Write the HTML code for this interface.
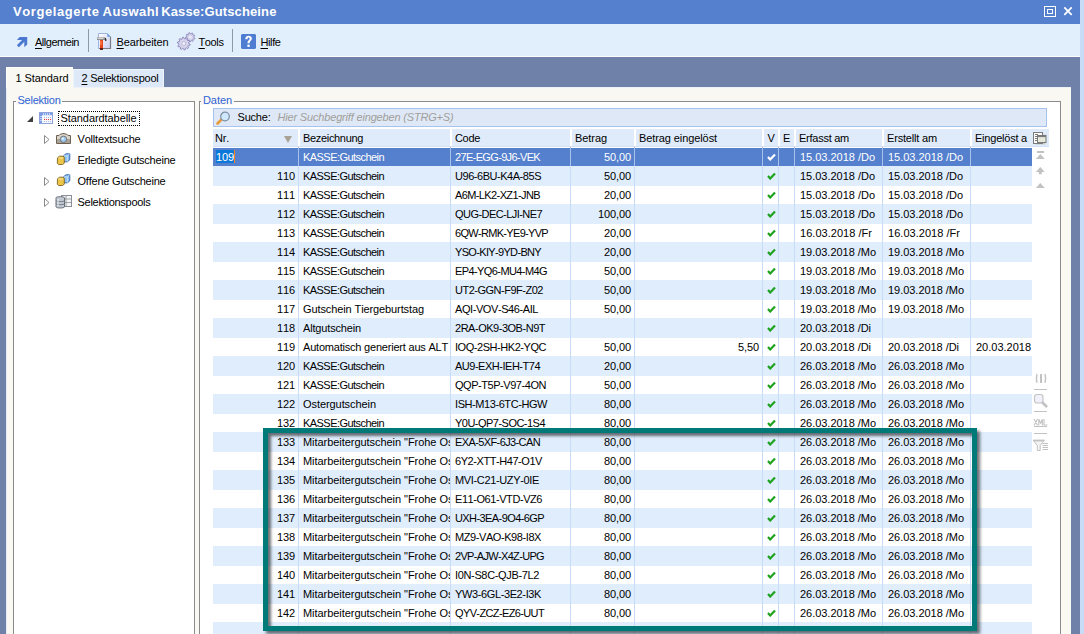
<!DOCTYPE html><html><head><meta charset="utf-8"><style>
*{margin:0;padding:0;box-sizing:border-box}
html,body{width:1084px;height:634px;overflow:hidden}
body{background:#6f80a9;font-family:"Liberation Sans",sans-serif;font-size:11px;color:#000;position:relative;font-kerning:none}
.a{position:absolute}
.t{position:absolute;white-space:nowrap;line-height:19px;height:19px;overflow:visible}
.c{overflow:hidden}
.u{text-decoration:underline;text-underline-offset:1.5px;text-decoration-thickness:1px}
</style></head><body>

<div class="a" style="left:0;top:0;width:1080px;height:24px;background:#5580cd"></div>
<div class="t" style="left:13.00px;top:2.00px;letter-spacing:0.586px;color:#fff;font-weight:bold;font-size:13px">Vorgelagerte</div>
<div class="t" style="left:102.60px;top:2.00px;letter-spacing:0.435px;color:#fff;font-weight:bold;font-size:13px">Auswahl</div>
<div class="t" style="left:161.20px;top:2.00px;letter-spacing:0.117px;color:#fff;font-weight:bold;font-size:13px">Kasse:Gutscheine</div>
<div class="a" style="left:1044px;top:6px;width:12px;height:11px;border:1.5px solid #fff"></div>
<div class="a" style="left:1047px;top:9px;width:6px;height:5px;border:1.5px solid #fff"></div>
<svg class="a" style="left:1060px;top:4px" width="16" height="16" viewBox="0 0 16 16"><path d="M4.3 3.4L11.7 10.8M11.7 3.4L4.3 10.8" stroke="#fff" stroke-width="1.8"/></svg>
<div class="a" style="left:1080px;top:0;width:4px;height:634px;background:#c8dcf8"></div>
<div class="a" style="left:0;top:24px;width:1080px;height:32px;background:#e1effc"></div>
<div class="a" style="left:0;top:56px;width:1080px;height:1px;background:#fbfdff"></div>
<div class="a" style="left:88px;top:29px;width:1px;height:23px;background:#8e9aa8"></div>
<div class="a" style="left:232px;top:29px;width:1px;height:23px;background:#8e9aa8"></div>
<svg class="a" style="left:12px;top:30px" width="24" height="24" viewBox="0 0 24 24"><path d="M4.9 9.9L7.7 7.1H15.2V14.5L12.3 17.3V10H4.9Z" fill="#4a77cf"/><path d="M5.9 16.3L12.6 9.6" stroke="#4a77cf" stroke-width="2.8"/></svg>
<svg class="a" style="left:92px;top:30px" width="24" height="24" viewBox="0 0 24 24"><defs><linearGradient id="dg" x1="0" y1="0" x2="1" y2="1"><stop offset="0" stop-color="#ffffff"/><stop offset="1" stop-color="#c9cdf2"/></linearGradient></defs><path d="M6.5 3.5H15.3L18.5 6.7V18.5H6.5Z" fill="url(#dg)" stroke="#9fb3dc"/><path d="M18.5 6.7V18.5H7" fill="none" stroke="#7d7d80" stroke-width="1.2"/><path d="M15.3 3.5V6.7H18.5Z" fill="#5f9be6"/><path d="M5 7.2H12.3C13.8 7.2 14.6 8.4 14.2 11.2L13.2 10.8C13.1 9.9 12.7 9.8 12 10H5Z" fill="#8f8f90"/><path d="M5.5 8.2H11.5" stroke="#f4f4f4" stroke-width="1"/><path d="M13.3 8.3C13.8 8.9 13.9 9.8 13.7 10.8" stroke="#202020" stroke-width="1.2" fill="none"/><rect x="8" y="10" width="3" height="9.5" fill="#e8461a"/><rect x="8" y="18.2" width="3" height="1.6" fill="#401008"/><path d="M9 11V15" stroke="#ffb070" stroke-width="0.8"/></svg>
<svg class="a" style="left:174px;top:30px" width="24" height="24" viewBox="0 0 24 24"><path d="M20.91 8.23 L20.67 9.02 L19.29 9.13 L18.92 9.62 L19.23 10.98 L18.55 11.43 L17.41 10.62 L16.82 10.76 L16.18 12.00 L15.37 11.91 L15.02 10.56 L14.47 10.29 L13.19 10.82 L12.62 10.23 L13.23 8.97 L12.98 8.41 L11.65 8.00 L11.60 7.18 L12.87 6.60 L13.04 6.02 L12.29 4.85 L12.78 4.19 L14.12 4.56 L14.63 4.23 L14.81 2.84 L15.60 2.65 L16.39 3.80 L17.00 3.87 L18.02 2.93 L18.75 3.29 L18.62 4.68 L19.04 5.12 L20.43 5.05 L20.76 5.81 L19.76 6.78 L19.80 7.39Z" fill="#d4d1ea" stroke="#8b87bb" stroke-width="0.9"/><circle cx="16.3" cy="7.3" r="1.3" fill="#eeeefa"/><path d="M16.17 14.24 L15.99 15.23 L14.29 15.57 L13.92 16.25 L14.58 17.86 L13.85 18.55 L12.27 17.83 L11.58 18.17 L11.16 19.85 L10.17 19.99 L9.31 18.48 L8.55 18.34 L7.22 19.46 L6.34 18.98 L6.54 17.26 L6.01 16.70 L4.27 16.83 L3.84 15.92 L5.01 14.64 L4.91 13.88 L3.43 12.96 L3.61 11.97 L5.31 11.63 L5.68 10.95 L5.02 9.34 L5.75 8.65 L7.33 9.37 L8.02 9.03 L8.44 7.35 L9.43 7.21 L10.29 8.72 L11.05 8.86 L12.38 7.74 L13.26 8.22 L13.06 9.94 L13.59 10.50 L15.33 10.37 L15.76 11.28 L14.59 12.56 L14.69 13.32Z" fill="#d6d3ec" stroke="#8682b6" stroke-width="0.9"/><circle cx="9.8" cy="13.6" r="1.9" fill="#f2f2fb" stroke="#a09cc8" stroke-width="0.6"/></svg>
<svg class="a" style="left:241px;top:34px" width="15" height="15" viewBox="0 0 15 15"><path d="M1 0H14L15 1V14L14 15H1L0 14V1Z" fill="#4f7dd2"/><path d="M4.3 5.2C4.3 2.6 6 1.8 7.6 1.8C9.6 1.8 10.9 3 10.9 4.6C10.9 6.8 8.6 7 8.6 9.3H6.5C6.5 6.2 8.6 6.2 8.6 4.7C8.6 3.9 8.2 3.6 7.5 3.6C6.8 3.6 6.5 4.1 6.5 5.2Z" fill="#fff"/><rect x="6.4" y="10.6" width="2.3" height="2.3" fill="#fff"/></svg>
<div class="t" style="left:35.00px;top:32.69px;letter-spacing:-0.478px;"><span class="u">A</span>llgemein</div>
<div class="t" style="left:116.50px;top:32.69px;letter-spacing:-0.121px;"><span class="u">B</span>earbeiten</div>
<div class="t" style="left:198.50px;top:32.69px;letter-spacing:-0.380px;"><span class="u">T</span>ools</div>
<div class="t" style="left:260.50px;top:32.69px;letter-spacing:-0.401px;"><span class="u">H</span>ilfe</div>
<div class="a" style="left:6px;top:87px;width:1065px;height:547px;background:#f9f8f3;border-top:1px solid #eef2f8;border-left:1px solid #e4ebf4"></div>
<div class="a" style="left:6px;top:67px;width:67px;height:21px;background:#f9f8f3;border-top:1px solid #fdfdfb;border-left:1px solid #fdfdfb"></div>
<div class="a" style="left:73px;top:69px;width:91px;height:18px;background:#dde9f8;border:1px solid #eef4fc;border-bottom:none"></div>
<div class="t" style="left:15.50px;top:68.69px;letter-spacing:-0.082px;">1 Standard</div>
<div class="t" style="left:81.50px;top:68.69px;letter-spacing:-0.233px;"><span class="u">2</span> Selektionspool</div>
<div class="a" style="left:13px;top:101px;width:182px;height:540px;border:1px solid #8b8b8b;background:#fff"></div>
<div class="a" style="left:199px;top:101px;width:862px;height:540px;border:1px solid #8b8b8b;background:#fff"></div>
<div class="a" style="left:16px;top:95px;width:46px;height:10px;background:#f9f8f3"></div>
<div class="a" style="left:201px;top:95px;width:33px;height:10px;background:#f9f8f3"></div>
<div class="t" style="left:17.50px;top:90.69px;letter-spacing:-0.250px;color:#2f64d6">Selektion</div>
<div class="t" style="left:203.00px;top:90.69px;letter-spacing:-0.071px;color:#2f64d6">Daten</div>
<svg class="a" style="left:27px;top:116px" width="7" height="6"><path d="M6 0V6H0Z" fill="#404040"/></svg>
<svg class="a" style="left:39px;top:112px" width="14" height="12" viewBox="0 0 14 12"><rect x="0.5" y="0.5" width="13" height="11" fill="#f6f8fe" stroke="#8ea2dc"/><rect x="1" y="1" width="12" height="2.2" fill="#7c9ce6"/><path d="M4.5 1.2V3M6.5 1.2V3M8.5 1.2V3M10.5 1.2V3" stroke="#e4ecfc" stroke-width="0.8"/><rect x="1" y="1" width="2" height="10" fill="#7c9ce6"/><path d="M1.2 4.5H2.8M1.2 6.5H2.8M1.2 8.5H2.8" stroke="#e4ecfc" stroke-width="0.8"/><path d="M5 7.5H13" stroke="#e83030" stroke-width="1" stroke-dasharray="1 1"/><path d="M5 5.5H13M5 9.5H13" stroke="#aebde8" stroke-width="1" stroke-dasharray="1 1"/></svg>
<div class="a" style="left:58px;top:111px;width:82px;height:15px;border:1px dotted #000"></div>
<div class="t" style="left:60.50px;top:108.69px;letter-spacing:-0.071px;">Standardtabelle</div>
<svg class="a" style="left:44px;top:135px" width="6" height="9"><path d="M0.5 0.5L5 4.5L0.5 8.5Z" fill="#fff" stroke="#8a8a8a"/></svg>
<svg class="a" style="left:56px;top:133px" width="15" height="11" viewBox="0 0 15 11"><path d="M0.5 2.5H3L4.5 1H6.5V0.5H8.5V1H10.5L12 2.5H14.5V10.5H0.5Z" fill="#d8d4cc" stroke="#6f6250"/><rect x="1" y="6" width="13" height="4" fill="#a8a39a"/><circle cx="7.5" cy="6.3" r="3.2" fill="#9cc8f4" stroke="#6f6250" stroke-width="0.8"/><circle cx="6.8" cy="5.6" r="1.2" fill="#e6f2ff"/></svg>
<div class="t" style="left:77.50px;top:129.69px;letter-spacing:-0.187px;">Volltextsuche</div>
<svg class="a" style="left:56px;top:153px" width="15" height="12" viewBox="0 0 15 12"><path d="M7.5 2.8L10 0.8H13.8V6.8L11.3 8.8H7.5Z" fill="#8cc0f0" stroke="#2f5fa8" stroke-width="0.9"/><path d="M7.8 2.8H11.3V8.6M11.3 2.8L13.8 0.8" stroke="#e8f3ff" stroke-width="0.6" fill="none"/><path d="M1.5 4.8L3.5 3.2H7L8.3 4.3V10.2L6.5 11.5H2.5L1.3 10.2Z" fill="#edc54a" stroke="#7f6420" stroke-width="0.9"/><path d="M2.3 5H7" stroke="#fff2b0" stroke-width="0.8"/></svg>
<div class="t" style="left:77.50px;top:150.69px;letter-spacing:-0.206px;">Erledigte Gutscheine</div>
<svg class="a" style="left:44px;top:177px" width="6" height="9"><path d="M0.5 0.5L5 4.5L0.5 8.5Z" fill="#fff" stroke="#8a8a8a"/></svg>
<svg class="a" style="left:56px;top:174px" width="15" height="12" viewBox="0 0 15 12"><path d="M7.5 2.8L10 0.8H13.8V6.8L11.3 8.8H7.5Z" fill="#8cc0f0" stroke="#2f5fa8" stroke-width="0.9"/><path d="M7.8 2.8H11.3V8.6M11.3 2.8L13.8 0.8" stroke="#e8f3ff" stroke-width="0.6" fill="none"/><path d="M1.5 4.8L3.5 3.2H7L8.3 4.3V10.2L6.5 11.5H2.5L1.3 10.2Z" fill="#edc54a" stroke="#7f6420" stroke-width="0.9"/><path d="M2.3 5H7" stroke="#fff2b0" stroke-width="0.8"/></svg>
<div class="t" style="left:77.50px;top:171.69px;letter-spacing:-0.219px;">Offene Gutscheine</div>
<svg class="a" style="left:44px;top:198px" width="6" height="9"><path d="M0.5 0.5L5 4.5L0.5 8.5Z" fill="#fff" stroke="#8a8a8a"/></svg>
<svg class="a" style="left:55px;top:195px" width="17" height="14" viewBox="0 0 17 14"><rect x="6.5" y="0.5" width="10" height="11" fill="#f4f5f6" stroke="#8c9098"/><path d="M6.5 4H16.5M6.5 7.5H16.5M11 0.5V11.5" stroke="#8c9098" stroke-width="0.8"/><path d="M1 2.8C1 1.3 9.5 1.3 9.5 2.8V11.8C9.5 13.4 1 13.4 1 11.8Z" fill="#c2c9d2" stroke="#5f6670" stroke-width="0.9"/><path d="M1 5.5C1 7 9.5 7 9.5 5.5M1 8.5C1 10 9.5 10 9.5 8.5" stroke="#5f6670" stroke-width="0.8" fill="none"/><path d="M3 4V11" stroke="#eef2f6" stroke-width="1"/></svg>
<div class="t" style="left:77.50px;top:192.69px;letter-spacing:-0.270px;">Selektionspools</div>
<div class="a" style="left:213px;top:108px;width:834px;height:19px;background:#dfe8f6;border:1px solid #a7c2ec"></div>
<svg class="a" style="left:216px;top:111px" width="15" height="14" viewBox="0 0 15 14"><path d="M1.5 12.5L6 8" stroke="#e69a3a" stroke-width="2.6" stroke-linecap="round"/><circle cx="9" cy="5.5" r="4.3" fill="#cfe8fb" stroke="#7a8ea6" stroke-width="1.2"/></svg>
<div class="t" style="left:237.50px;top:107.69px;letter-spacing:-0.208px;">Suche:</div>
<div class="t" style="left:277.50px;top:107.69px;letter-spacing:-0.173px;color:#a09f9a;font-style:italic">Hier Suchbegriff eingeben (STRG+S)</div>
<div class="a" style="left:213px;top:127px;width:836px;height:21px;background:#fff"></div>
<div class="a" style="left:213px;top:129px;width:85px;height:17px;background:#dfebfa"></div>
<div class="t" style="left:215.00px;top:128.69px;letter-spacing:-0.221px;">Nr.</div>
<div class="a" style="left:300px;top:129px;width:150px;height:17px;background:#dfebfa"></div>
<div class="t" style="left:303.00px;top:128.69px;letter-spacing:-0.328px;">Bezeichnung</div>
<div class="a" style="left:452px;top:129px;width:118px;height:17px;background:#dfebfa"></div>
<div class="t" style="left:455.00px;top:128.69px;letter-spacing:-0.324px;">Code</div>
<div class="a" style="left:572px;top:129px;width:62px;height:17px;background:#dfebfa"></div>
<div class="t" style="left:575.00px;top:128.69px;letter-spacing:-0.068px;">Betrag</div>
<div class="a" style="left:636px;top:129px;width:126px;height:17px;background:#dfebfa"></div>
<div class="t" style="left:639.00px;top:128.69px;letter-spacing:-0.094px;">Betrag eingelöst</div>
<div class="a" style="left:764px;top:129px;width:14px;height:17px;background:#dfebfa"></div>
<div class="t" style="left:767.50px;top:128.69px;letter-spacing:-1.337px;">V</div>
<div class="a" style="left:780px;top:129px;width:14px;height:17px;background:#dfebfa"></div>
<div class="t" style="left:783.00px;top:128.69px;letter-spacing:-1.337px;">E</div>
<div class="a" style="left:796px;top:129px;width:86px;height:17px;background:#dfebfa"></div>
<div class="t" style="left:799.00px;top:128.69px;letter-spacing:-0.257px;">Erfasst am</div>
<div class="a" style="left:884px;top:129px;width:86px;height:17px;background:#dfebfa"></div>
<div class="t" style="left:887.00px;top:128.69px;letter-spacing:-0.178px;">Erstellt am</div>
<div class="a" style="left:972px;top:129px;width:77px;height:17px;background:#dfebfa"></div>
<div class="t" style="left:975.00px;top:128.69px;letter-spacing:-0.220px;">Eingelöst a</div>
<div class="a" style="left:213px;top:146px;width:836px;height:1px;background:#d3e2f7"></div>
<svg class="a" style="left:284px;top:136px" width="8" height="7"><path d="M0 0H8L4 7Z" fill="#a8a394"/></svg>
<svg class="a" style="left:1032px;top:131px" width="16" height="15" viewBox="0 0 16 15"><rect x="3.5" y="3.5" width="10" height="10" fill="#b8bca8" opacity="0.6"/><rect x="1.5" y="1.5" width="9" height="11" fill="#fbfbfb" stroke="#7b7b7b"/><path d="M3 3.5H6M3 5.5H5M3 7.5H5M3 9.5H5" stroke="#7b7b7b"/><rect x="5.5" y="4.5" width="8.5" height="7" fill="#e6e8dc" stroke="#7b7b7b"/><rect x="5.5" y="4.5" width="8.5" height="1.6" fill="#7b7b7b"/></svg>
<div class="a" style="left:213px;top:148px;width:819px;height:18px;background:#5580cd"></div>
<div class="a" style="left:298px;top:147px;width:1px;height:19px;background:#a9c2ec"></div>
<div class="a" style="left:450px;top:147px;width:1px;height:19px;background:#a9c2ec"></div>
<div class="a" style="left:570px;top:147px;width:1px;height:19px;background:#a9c2ec"></div>
<div class="a" style="left:634px;top:147px;width:1px;height:19px;background:#a9c2ec"></div>
<div class="a" style="left:762px;top:147px;width:1px;height:19px;background:#a9c2ec"></div>
<div class="a" style="left:778px;top:147px;width:1px;height:19px;background:#a9c2ec"></div>
<div class="a" style="left:794px;top:147px;width:1px;height:19px;background:#a9c2ec"></div>
<div class="a" style="left:882px;top:147px;width:1px;height:19px;background:#a9c2ec"></div>
<div class="a" style="left:970px;top:147px;width:1px;height:19px;background:#a9c2ec"></div>
<div class="a" style="left:216px;top:150px;width:18px;height:13px;background:#0c78da"></div>
<div class="t" style="left:216.00px;top:147.69px;letter-spacing:-0.118px;color:#fff">109</div>
<div class="a" style="left:234px;top:150px;width:1px;height:13px;background:#ff8a1a"></div>
<div class="a c" style="left:298px;top:147px;width:152px;height:19px"><div class="t" style="left:5.00px;top:0.69px;letter-spacing:-0.551px;color:#fff">KASSE:Gutschein</div></div>
<div class="t" style="left:455.00px;top:147.69px;letter-spacing:-0.650px;color:#fff">27E-EGG-9J6-VEK</div>
<div class="t" style="left:604.00px;top:147.69px;letter-spacing:-0.105px;color:#fff">50,00</div>
<svg class="a" style="left:767px;top:153px" width="9" height="8" viewBox="0 0 9 8"><path d="M1 4L3.2 6.5L8 1.5" stroke="#fff" stroke-width="2.2" fill="none"/></svg>
<div class="t" style="left:800.00px;top:147.69px;letter-spacing:-0.016px;color:#fff">15.03.2018 /Do</div>
<div class="t" style="left:888.00px;top:147.69px;letter-spacing:-0.016px;color:#fff">15.03.2018 /Do</div>
<div class="a" style="left:213px;top:166px;width:819px;height:20px;background:#dfedfd"></div>
<div class="a" style="left:298px;top:166px;width:1px;height:19px;background:#c9dcf7"></div>
<div class="a" style="left:450px;top:166px;width:1px;height:19px;background:#c9dcf7"></div>
<div class="a" style="left:570px;top:166px;width:1px;height:19px;background:#c9dcf7"></div>
<div class="a" style="left:634px;top:166px;width:1px;height:19px;background:#c9dcf7"></div>
<div class="a" style="left:762px;top:166px;width:1px;height:19px;background:#c9dcf7"></div>
<div class="a" style="left:778px;top:166px;width:1px;height:19px;background:#c9dcf7"></div>
<div class="a" style="left:794px;top:166px;width:1px;height:19px;background:#c9dcf7"></div>
<div class="a" style="left:882px;top:166px;width:1px;height:19px;background:#c9dcf7"></div>
<div class="a" style="left:970px;top:166px;width:1px;height:19px;background:#c9dcf7"></div>
<div class="t" style="left:277.00px;top:166.69px;letter-spacing:-0.118px;">110</div>
<div class="a c" style="left:298px;top:166px;width:152px;height:19px"><div class="t" style="left:5.00px;top:0.69px;letter-spacing:-0.551px;color:#000">KASSE:Gutschein</div></div>
<div class="t" style="left:455.00px;top:166.69px;letter-spacing:-0.462px;color:#000">U96-6BU-K4A-85S</div>
<div class="t" style="left:604.00px;top:166.69px;letter-spacing:-0.105px;color:#000">50,00</div>
<svg class="a" style="left:767px;top:172px" width="9" height="8" viewBox="0 0 9 8"><path d="M1 4L3.2 6.5L8 1.5" stroke="#1ea21e" stroke-width="2.2" fill="none"/></svg>
<div class="t" style="left:800.00px;top:166.69px;letter-spacing:-0.016px;color:#000">15.03.2018 /Do</div>
<div class="t" style="left:888.00px;top:166.69px;letter-spacing:-0.016px;color:#000">15.03.2018 /Do</div>
<div class="a" style="left:213px;top:186px;width:819px;height:18px;background:#ffffff"></div>
<div class="a" style="left:298px;top:185px;width:1px;height:19px;background:#c9dcf7"></div>
<div class="a" style="left:450px;top:185px;width:1px;height:19px;background:#c9dcf7"></div>
<div class="a" style="left:570px;top:185px;width:1px;height:19px;background:#c9dcf7"></div>
<div class="a" style="left:634px;top:185px;width:1px;height:19px;background:#c9dcf7"></div>
<div class="a" style="left:762px;top:185px;width:1px;height:19px;background:#c9dcf7"></div>
<div class="a" style="left:778px;top:185px;width:1px;height:19px;background:#c9dcf7"></div>
<div class="a" style="left:794px;top:185px;width:1px;height:19px;background:#c9dcf7"></div>
<div class="a" style="left:882px;top:185px;width:1px;height:19px;background:#c9dcf7"></div>
<div class="a" style="left:970px;top:185px;width:1px;height:19px;background:#c9dcf7"></div>
<div class="t" style="left:277.00px;top:185.69px;letter-spacing:-0.118px;">111</div>
<div class="a c" style="left:298px;top:185px;width:152px;height:19px"><div class="t" style="left:5.00px;top:0.69px;letter-spacing:-0.551px;color:#000">KASSE:Gutschein</div></div>
<div class="t" style="left:455.00px;top:185.69px;letter-spacing:-0.609px;color:#000">A6M-LK2-XZ1-JNB</div>
<div class="t" style="left:604.00px;top:185.69px;letter-spacing:-0.105px;color:#000">20,00</div>
<svg class="a" style="left:767px;top:191px" width="9" height="8" viewBox="0 0 9 8"><path d="M1 4L3.2 6.5L8 1.5" stroke="#1ea21e" stroke-width="2.2" fill="none"/></svg>
<div class="t" style="left:800.00px;top:185.69px;letter-spacing:-0.016px;color:#000">15.03.2018 /Do</div>
<div class="t" style="left:888.00px;top:185.69px;letter-spacing:-0.016px;color:#000">15.03.2018 /Do</div>
<div class="a" style="left:213px;top:204px;width:819px;height:20px;background:#dfedfd"></div>
<div class="a" style="left:298px;top:204px;width:1px;height:19px;background:#c9dcf7"></div>
<div class="a" style="left:450px;top:204px;width:1px;height:19px;background:#c9dcf7"></div>
<div class="a" style="left:570px;top:204px;width:1px;height:19px;background:#c9dcf7"></div>
<div class="a" style="left:634px;top:204px;width:1px;height:19px;background:#c9dcf7"></div>
<div class="a" style="left:762px;top:204px;width:1px;height:19px;background:#c9dcf7"></div>
<div class="a" style="left:778px;top:204px;width:1px;height:19px;background:#c9dcf7"></div>
<div class="a" style="left:794px;top:204px;width:1px;height:19px;background:#c9dcf7"></div>
<div class="a" style="left:882px;top:204px;width:1px;height:19px;background:#c9dcf7"></div>
<div class="a" style="left:970px;top:204px;width:1px;height:19px;background:#c9dcf7"></div>
<div class="t" style="left:277.00px;top:204.69px;letter-spacing:-0.118px;">112</div>
<div class="a c" style="left:298px;top:204px;width:152px;height:19px"><div class="t" style="left:5.00px;top:0.69px;letter-spacing:-0.551px;color:#000">KASSE:Gutschein</div></div>
<div class="t" style="left:455.00px;top:204.69px;letter-spacing:-0.556px;color:#000">QUG-DEC-LJI-NE7</div>
<div class="t" style="left:598.00px;top:204.69px;letter-spacing:-0.107px;color:#000">100,00</div>
<svg class="a" style="left:767px;top:210px" width="9" height="8" viewBox="0 0 9 8"><path d="M1 4L3.2 6.5L8 1.5" stroke="#1ea21e" stroke-width="2.2" fill="none"/></svg>
<div class="t" style="left:800.00px;top:204.69px;letter-spacing:-0.016px;color:#000">15.03.2018 /Do</div>
<div class="t" style="left:888.00px;top:204.69px;letter-spacing:-0.016px;color:#000">15.03.2018 /Do</div>
<div class="a" style="left:213px;top:224px;width:819px;height:18px;background:#ffffff"></div>
<div class="a" style="left:298px;top:223px;width:1px;height:19px;background:#c9dcf7"></div>
<div class="a" style="left:450px;top:223px;width:1px;height:19px;background:#c9dcf7"></div>
<div class="a" style="left:570px;top:223px;width:1px;height:19px;background:#c9dcf7"></div>
<div class="a" style="left:634px;top:223px;width:1px;height:19px;background:#c9dcf7"></div>
<div class="a" style="left:762px;top:223px;width:1px;height:19px;background:#c9dcf7"></div>
<div class="a" style="left:778px;top:223px;width:1px;height:19px;background:#c9dcf7"></div>
<div class="a" style="left:794px;top:223px;width:1px;height:19px;background:#c9dcf7"></div>
<div class="a" style="left:882px;top:223px;width:1px;height:19px;background:#c9dcf7"></div>
<div class="a" style="left:970px;top:223px;width:1px;height:19px;background:#c9dcf7"></div>
<div class="t" style="left:277.00px;top:223.69px;letter-spacing:-0.118px;">113</div>
<div class="a c" style="left:298px;top:223px;width:152px;height:19px"><div class="t" style="left:5.00px;top:0.69px;letter-spacing:-0.551px;color:#000">KASSE:Gutschein</div></div>
<div class="t" style="left:455.00px;top:223.69px;letter-spacing:-0.686px;color:#000">6QW-RMK-YE9-YVP</div>
<div class="t" style="left:604.00px;top:223.69px;letter-spacing:-0.105px;color:#000">20,00</div>
<svg class="a" style="left:767px;top:229px" width="9" height="8" viewBox="0 0 9 8"><path d="M1 4L3.2 6.5L8 1.5" stroke="#1ea21e" stroke-width="2.2" fill="none"/></svg>
<div class="t" style="left:800.00px;top:223.69px;letter-spacing:0.032px;color:#000">16.03.2018 /Fr</div>
<div class="t" style="left:888.00px;top:223.69px;letter-spacing:0.032px;color:#000">16.03.2018 /Fr</div>
<div class="a" style="left:213px;top:242px;width:819px;height:20px;background:#dfedfd"></div>
<div class="a" style="left:298px;top:242px;width:1px;height:19px;background:#c9dcf7"></div>
<div class="a" style="left:450px;top:242px;width:1px;height:19px;background:#c9dcf7"></div>
<div class="a" style="left:570px;top:242px;width:1px;height:19px;background:#c9dcf7"></div>
<div class="a" style="left:634px;top:242px;width:1px;height:19px;background:#c9dcf7"></div>
<div class="a" style="left:762px;top:242px;width:1px;height:19px;background:#c9dcf7"></div>
<div class="a" style="left:778px;top:242px;width:1px;height:19px;background:#c9dcf7"></div>
<div class="a" style="left:794px;top:242px;width:1px;height:19px;background:#c9dcf7"></div>
<div class="a" style="left:882px;top:242px;width:1px;height:19px;background:#c9dcf7"></div>
<div class="a" style="left:970px;top:242px;width:1px;height:19px;background:#c9dcf7"></div>
<div class="t" style="left:277.00px;top:242.69px;letter-spacing:-0.118px;">114</div>
<div class="a c" style="left:298px;top:242px;width:152px;height:19px"><div class="t" style="left:5.00px;top:0.69px;letter-spacing:-0.551px;color:#000">KASSE:Gutschein</div></div>
<div class="t" style="left:455.00px;top:242.69px;letter-spacing:-0.664px;color:#000">YSO-KIY-9YD-BNY</div>
<div class="t" style="left:604.00px;top:242.69px;letter-spacing:-0.105px;color:#000">20,00</div>
<svg class="a" style="left:767px;top:248px" width="9" height="8" viewBox="0 0 9 8"><path d="M1 4L3.2 6.5L8 1.5" stroke="#1ea21e" stroke-width="2.2" fill="none"/></svg>
<div class="t" style="left:800.00px;top:242.69px;letter-spacing:-0.032px;color:#000">19.03.2018 /Mo</div>
<div class="t" style="left:888.00px;top:242.69px;letter-spacing:-0.032px;color:#000">19.03.2018 /Mo</div>
<div class="a" style="left:213px;top:262px;width:819px;height:18px;background:#ffffff"></div>
<div class="a" style="left:298px;top:261px;width:1px;height:19px;background:#c9dcf7"></div>
<div class="a" style="left:450px;top:261px;width:1px;height:19px;background:#c9dcf7"></div>
<div class="a" style="left:570px;top:261px;width:1px;height:19px;background:#c9dcf7"></div>
<div class="a" style="left:634px;top:261px;width:1px;height:19px;background:#c9dcf7"></div>
<div class="a" style="left:762px;top:261px;width:1px;height:19px;background:#c9dcf7"></div>
<div class="a" style="left:778px;top:261px;width:1px;height:19px;background:#c9dcf7"></div>
<div class="a" style="left:794px;top:261px;width:1px;height:19px;background:#c9dcf7"></div>
<div class="a" style="left:882px;top:261px;width:1px;height:19px;background:#c9dcf7"></div>
<div class="a" style="left:970px;top:261px;width:1px;height:19px;background:#c9dcf7"></div>
<div class="t" style="left:277.00px;top:261.69px;letter-spacing:-0.118px;">115</div>
<div class="a c" style="left:298px;top:261px;width:152px;height:19px"><div class="t" style="left:5.00px;top:0.69px;letter-spacing:-0.551px;color:#000">KASSE:Gutschein</div></div>
<div class="t" style="left:455.00px;top:261.69px;letter-spacing:-0.590px;color:#000">EP4-YQ6-MU4-M4G</div>
<div class="t" style="left:604.00px;top:261.69px;letter-spacing:-0.105px;color:#000">50,00</div>
<svg class="a" style="left:767px;top:267px" width="9" height="8" viewBox="0 0 9 8"><path d="M1 4L3.2 6.5L8 1.5" stroke="#1ea21e" stroke-width="2.2" fill="none"/></svg>
<div class="t" style="left:800.00px;top:261.69px;letter-spacing:-0.032px;color:#000">19.03.2018 /Mo</div>
<div class="t" style="left:888.00px;top:261.69px;letter-spacing:-0.032px;color:#000">19.03.2018 /Mo</div>
<div class="a" style="left:213px;top:280px;width:819px;height:20px;background:#dfedfd"></div>
<div class="a" style="left:298px;top:280px;width:1px;height:19px;background:#c9dcf7"></div>
<div class="a" style="left:450px;top:280px;width:1px;height:19px;background:#c9dcf7"></div>
<div class="a" style="left:570px;top:280px;width:1px;height:19px;background:#c9dcf7"></div>
<div class="a" style="left:634px;top:280px;width:1px;height:19px;background:#c9dcf7"></div>
<div class="a" style="left:762px;top:280px;width:1px;height:19px;background:#c9dcf7"></div>
<div class="a" style="left:778px;top:280px;width:1px;height:19px;background:#c9dcf7"></div>
<div class="a" style="left:794px;top:280px;width:1px;height:19px;background:#c9dcf7"></div>
<div class="a" style="left:882px;top:280px;width:1px;height:19px;background:#c9dcf7"></div>
<div class="a" style="left:970px;top:280px;width:1px;height:19px;background:#c9dcf7"></div>
<div class="t" style="left:277.00px;top:280.69px;letter-spacing:-0.118px;">116</div>
<div class="a c" style="left:298px;top:280px;width:152px;height:19px"><div class="t" style="left:5.00px;top:0.69px;letter-spacing:-0.551px;color:#000">KASSE:Gutschein</div></div>
<div class="t" style="left:455.00px;top:280.69px;letter-spacing:-0.489px;color:#000">UT2-GGN-F9F-Z02</div>
<div class="t" style="left:604.00px;top:280.69px;letter-spacing:-0.105px;color:#000">50,00</div>
<svg class="a" style="left:767px;top:286px" width="9" height="8" viewBox="0 0 9 8"><path d="M1 4L3.2 6.5L8 1.5" stroke="#1ea21e" stroke-width="2.2" fill="none"/></svg>
<div class="t" style="left:800.00px;top:280.69px;letter-spacing:-0.032px;color:#000">19.03.2018 /Mo</div>
<div class="t" style="left:888.00px;top:280.69px;letter-spacing:-0.032px;color:#000">19.03.2018 /Mo</div>
<div class="a" style="left:213px;top:300px;width:819px;height:18px;background:#ffffff"></div>
<div class="a" style="left:298px;top:299px;width:1px;height:19px;background:#c9dcf7"></div>
<div class="a" style="left:450px;top:299px;width:1px;height:19px;background:#c9dcf7"></div>
<div class="a" style="left:570px;top:299px;width:1px;height:19px;background:#c9dcf7"></div>
<div class="a" style="left:634px;top:299px;width:1px;height:19px;background:#c9dcf7"></div>
<div class="a" style="left:762px;top:299px;width:1px;height:19px;background:#c9dcf7"></div>
<div class="a" style="left:778px;top:299px;width:1px;height:19px;background:#c9dcf7"></div>
<div class="a" style="left:794px;top:299px;width:1px;height:19px;background:#c9dcf7"></div>
<div class="a" style="left:882px;top:299px;width:1px;height:19px;background:#c9dcf7"></div>
<div class="a" style="left:970px;top:299px;width:1px;height:19px;background:#c9dcf7"></div>
<div class="t" style="left:277.00px;top:299.69px;letter-spacing:-0.118px;">117</div>
<div class="a c" style="left:298px;top:299px;width:152px;height:19px"><div class="t" style="left:5.00px;top:0.69px;letter-spacing:-0.105px;color:#000">Gutschein Tiergeburtstag</div></div>
<div class="t" style="left:455.00px;top:299.69px;letter-spacing:-0.417px;color:#000">AQI-VOV-S46-AIL</div>
<div class="t" style="left:604.00px;top:299.69px;letter-spacing:-0.105px;color:#000">50,00</div>
<svg class="a" style="left:767px;top:305px" width="9" height="8" viewBox="0 0 9 8"><path d="M1 4L3.2 6.5L8 1.5" stroke="#1ea21e" stroke-width="2.2" fill="none"/></svg>
<div class="t" style="left:800.00px;top:299.69px;letter-spacing:-0.032px;color:#000">19.03.2018 /Mo</div>
<div class="t" style="left:888.00px;top:299.69px;letter-spacing:-0.032px;color:#000">19.03.2018 /Mo</div>
<div class="a" style="left:213px;top:318px;width:819px;height:20px;background:#dfedfd"></div>
<div class="a" style="left:298px;top:318px;width:1px;height:19px;background:#c9dcf7"></div>
<div class="a" style="left:450px;top:318px;width:1px;height:19px;background:#c9dcf7"></div>
<div class="a" style="left:570px;top:318px;width:1px;height:19px;background:#c9dcf7"></div>
<div class="a" style="left:634px;top:318px;width:1px;height:19px;background:#c9dcf7"></div>
<div class="a" style="left:762px;top:318px;width:1px;height:19px;background:#c9dcf7"></div>
<div class="a" style="left:778px;top:318px;width:1px;height:19px;background:#c9dcf7"></div>
<div class="a" style="left:794px;top:318px;width:1px;height:19px;background:#c9dcf7"></div>
<div class="a" style="left:882px;top:318px;width:1px;height:19px;background:#c9dcf7"></div>
<div class="a" style="left:970px;top:318px;width:1px;height:19px;background:#c9dcf7"></div>
<div class="t" style="left:277.00px;top:318.69px;letter-spacing:-0.118px;">118</div>
<div class="a c" style="left:298px;top:318px;width:152px;height:19px"><div class="t" style="left:5.00px;top:0.69px;letter-spacing:-0.160px;color:#000">Altgutschein</div></div>
<div class="t" style="left:455.00px;top:318.69px;letter-spacing:-0.479px;color:#000">2RA-OK9-3OB-N9T</div>
<svg class="a" style="left:767px;top:324px" width="9" height="8" viewBox="0 0 9 8"><path d="M1 4L3.2 6.5L8 1.5" stroke="#1ea21e" stroke-width="2.2" fill="none"/></svg>
<div class="t" style="left:800.00px;top:318.69px;letter-spacing:-0.040px;color:#000">20.03.2018 /Di</div>
<div class="a" style="left:213px;top:338px;width:819px;height:18px;background:#ffffff"></div>
<div class="a" style="left:298px;top:337px;width:1px;height:19px;background:#c9dcf7"></div>
<div class="a" style="left:450px;top:337px;width:1px;height:19px;background:#c9dcf7"></div>
<div class="a" style="left:570px;top:337px;width:1px;height:19px;background:#c9dcf7"></div>
<div class="a" style="left:634px;top:337px;width:1px;height:19px;background:#c9dcf7"></div>
<div class="a" style="left:762px;top:337px;width:1px;height:19px;background:#c9dcf7"></div>
<div class="a" style="left:778px;top:337px;width:1px;height:19px;background:#c9dcf7"></div>
<div class="a" style="left:794px;top:337px;width:1px;height:19px;background:#c9dcf7"></div>
<div class="a" style="left:882px;top:337px;width:1px;height:19px;background:#c9dcf7"></div>
<div class="a" style="left:970px;top:337px;width:1px;height:19px;background:#c9dcf7"></div>
<div class="t" style="left:277.00px;top:337.69px;letter-spacing:-0.118px;">119</div>
<div class="a c" style="left:298px;top:337px;width:152px;height:19px"><div class="t" style="left:5.00px;top:0.69px;letter-spacing:-0.208px;color:#000">Automatisch generiert aus ALT</div></div>
<div class="t" style="left:455.00px;top:337.69px;letter-spacing:-0.453px;color:#000">IOQ-2SH-HK2-YQC</div>
<div class="t" style="left:604.00px;top:337.69px;letter-spacing:-0.105px;color:#000">50,00</div>
<div class="t" style="left:738.00px;top:337.69px;letter-spacing:-0.102px;color:#000">5,50</div>
<svg class="a" style="left:767px;top:343px" width="9" height="8" viewBox="0 0 9 8"><path d="M1 4L3.2 6.5L8 1.5" stroke="#1ea21e" stroke-width="2.2" fill="none"/></svg>
<div class="t" style="left:800.00px;top:337.69px;letter-spacing:-0.040px;color:#000">20.03.2018 /Di</div>
<div class="t" style="left:888.00px;top:337.69px;letter-spacing:-0.040px;color:#000">20.03.2018 /Di</div>
<div class="t" style="left:976.00px;top:337.69px;letter-spacing:-0.005px;color:#000">20.03.2018</div>
<div class="a" style="left:213px;top:356px;width:819px;height:20px;background:#dfedfd"></div>
<div class="a" style="left:298px;top:356px;width:1px;height:19px;background:#c9dcf7"></div>
<div class="a" style="left:450px;top:356px;width:1px;height:19px;background:#c9dcf7"></div>
<div class="a" style="left:570px;top:356px;width:1px;height:19px;background:#c9dcf7"></div>
<div class="a" style="left:634px;top:356px;width:1px;height:19px;background:#c9dcf7"></div>
<div class="a" style="left:762px;top:356px;width:1px;height:19px;background:#c9dcf7"></div>
<div class="a" style="left:778px;top:356px;width:1px;height:19px;background:#c9dcf7"></div>
<div class="a" style="left:794px;top:356px;width:1px;height:19px;background:#c9dcf7"></div>
<div class="a" style="left:882px;top:356px;width:1px;height:19px;background:#c9dcf7"></div>
<div class="a" style="left:970px;top:356px;width:1px;height:19px;background:#c9dcf7"></div>
<div class="t" style="left:277.00px;top:356.69px;letter-spacing:-0.118px;">120</div>
<div class="a c" style="left:298px;top:356px;width:152px;height:19px"><div class="t" style="left:5.00px;top:0.69px;letter-spacing:-0.551px;color:#000">KASSE:Gutschein</div></div>
<div class="t" style="left:455.00px;top:356.69px;letter-spacing:-0.486px;color:#000">AU9-EXH-IEH-T74</div>
<div class="t" style="left:604.00px;top:356.69px;letter-spacing:-0.105px;color:#000">20,00</div>
<svg class="a" style="left:767px;top:362px" width="9" height="8" viewBox="0 0 9 8"><path d="M1 4L3.2 6.5L8 1.5" stroke="#1ea21e" stroke-width="2.2" fill="none"/></svg>
<div class="t" style="left:800.00px;top:356.69px;letter-spacing:-0.032px;color:#000">26.03.2018 /Mo</div>
<div class="t" style="left:888.00px;top:356.69px;letter-spacing:-0.032px;color:#000">26.03.2018 /Mo</div>
<div class="a" style="left:213px;top:376px;width:819px;height:18px;background:#ffffff"></div>
<div class="a" style="left:298px;top:375px;width:1px;height:19px;background:#c9dcf7"></div>
<div class="a" style="left:450px;top:375px;width:1px;height:19px;background:#c9dcf7"></div>
<div class="a" style="left:570px;top:375px;width:1px;height:19px;background:#c9dcf7"></div>
<div class="a" style="left:634px;top:375px;width:1px;height:19px;background:#c9dcf7"></div>
<div class="a" style="left:762px;top:375px;width:1px;height:19px;background:#c9dcf7"></div>
<div class="a" style="left:778px;top:375px;width:1px;height:19px;background:#c9dcf7"></div>
<div class="a" style="left:794px;top:375px;width:1px;height:19px;background:#c9dcf7"></div>
<div class="a" style="left:882px;top:375px;width:1px;height:19px;background:#c9dcf7"></div>
<div class="a" style="left:970px;top:375px;width:1px;height:19px;background:#c9dcf7"></div>
<div class="t" style="left:277.00px;top:375.69px;letter-spacing:-0.118px;">121</div>
<div class="a c" style="left:298px;top:375px;width:152px;height:19px"><div class="t" style="left:5.00px;top:0.69px;letter-spacing:-0.551px;color:#000">KASSE:Gutschein</div></div>
<div class="t" style="left:455.00px;top:375.69px;letter-spacing:-0.453px;color:#000">QQP-T5P-V97-4ON</div>
<div class="t" style="left:604.00px;top:375.69px;letter-spacing:-0.105px;color:#000">50,00</div>
<svg class="a" style="left:767px;top:381px" width="9" height="8" viewBox="0 0 9 8"><path d="M1 4L3.2 6.5L8 1.5" stroke="#1ea21e" stroke-width="2.2" fill="none"/></svg>
<div class="t" style="left:800.00px;top:375.69px;letter-spacing:-0.032px;color:#000">26.03.2018 /Mo</div>
<div class="t" style="left:888.00px;top:375.69px;letter-spacing:-0.032px;color:#000">26.03.2018 /Mo</div>
<div class="a" style="left:213px;top:394px;width:819px;height:20px;background:#dfedfd"></div>
<div class="a" style="left:298px;top:394px;width:1px;height:19px;background:#c9dcf7"></div>
<div class="a" style="left:450px;top:394px;width:1px;height:19px;background:#c9dcf7"></div>
<div class="a" style="left:570px;top:394px;width:1px;height:19px;background:#c9dcf7"></div>
<div class="a" style="left:634px;top:394px;width:1px;height:19px;background:#c9dcf7"></div>
<div class="a" style="left:762px;top:394px;width:1px;height:19px;background:#c9dcf7"></div>
<div class="a" style="left:778px;top:394px;width:1px;height:19px;background:#c9dcf7"></div>
<div class="a" style="left:794px;top:394px;width:1px;height:19px;background:#c9dcf7"></div>
<div class="a" style="left:882px;top:394px;width:1px;height:19px;background:#c9dcf7"></div>
<div class="a" style="left:970px;top:394px;width:1px;height:19px;background:#c9dcf7"></div>
<div class="t" style="left:277.00px;top:394.69px;letter-spacing:-0.118px;">122</div>
<div class="a c" style="left:298px;top:394px;width:152px;height:19px"><div class="t" style="left:5.00px;top:0.69px;letter-spacing:-0.070px;color:#000">Ostergutschein</div></div>
<div class="t" style="left:455.00px;top:394.69px;letter-spacing:-0.426px;color:#000">ISH-M13-6TC-HGW</div>
<div class="t" style="left:604.00px;top:394.69px;letter-spacing:-0.105px;color:#000">80,00</div>
<svg class="a" style="left:767px;top:400px" width="9" height="8" viewBox="0 0 9 8"><path d="M1 4L3.2 6.5L8 1.5" stroke="#1ea21e" stroke-width="2.2" fill="none"/></svg>
<div class="t" style="left:800.00px;top:394.69px;letter-spacing:-0.032px;color:#000">26.03.2018 /Mo</div>
<div class="t" style="left:888.00px;top:394.69px;letter-spacing:-0.032px;color:#000">26.03.2018 /Mo</div>
<div class="a" style="left:213px;top:414px;width:819px;height:18px;background:#ffffff"></div>
<div class="a" style="left:298px;top:413px;width:1px;height:19px;background:#c9dcf7"></div>
<div class="a" style="left:450px;top:413px;width:1px;height:19px;background:#c9dcf7"></div>
<div class="a" style="left:570px;top:413px;width:1px;height:19px;background:#c9dcf7"></div>
<div class="a" style="left:634px;top:413px;width:1px;height:19px;background:#c9dcf7"></div>
<div class="a" style="left:762px;top:413px;width:1px;height:19px;background:#c9dcf7"></div>
<div class="a" style="left:778px;top:413px;width:1px;height:19px;background:#c9dcf7"></div>
<div class="a" style="left:794px;top:413px;width:1px;height:19px;background:#c9dcf7"></div>
<div class="a" style="left:882px;top:413px;width:1px;height:19px;background:#c9dcf7"></div>
<div class="a" style="left:970px;top:413px;width:1px;height:19px;background:#c9dcf7"></div>
<div class="t" style="left:277.00px;top:413.69px;letter-spacing:-0.118px;">132</div>
<div class="a c" style="left:298px;top:413px;width:152px;height:19px"><div class="t" style="left:5.00px;top:0.69px;letter-spacing:-0.551px;color:#000">KASSE:Gutschein</div></div>
<div class="t" style="left:455.00px;top:413.69px;letter-spacing:-0.521px;color:#000">Y0U-QP7-SOC-1S4</div>
<div class="t" style="left:604.00px;top:413.69px;letter-spacing:-0.105px;color:#000">80,00</div>
<svg class="a" style="left:767px;top:419px" width="9" height="8" viewBox="0 0 9 8"><path d="M1 4L3.2 6.5L8 1.5" stroke="#1ea21e" stroke-width="2.2" fill="none"/></svg>
<div class="t" style="left:800.00px;top:413.69px;letter-spacing:-0.032px;color:#000">26.03.2018 /Mo</div>
<div class="t" style="left:888.00px;top:413.69px;letter-spacing:-0.032px;color:#000">26.03.2018 /Mo</div>
<div class="a" style="left:213px;top:432px;width:819px;height:20px;background:#dfedfd"></div>
<div class="a" style="left:298px;top:432px;width:1px;height:19px;background:#c9dcf7"></div>
<div class="a" style="left:450px;top:432px;width:1px;height:19px;background:#c9dcf7"></div>
<div class="a" style="left:570px;top:432px;width:1px;height:19px;background:#c9dcf7"></div>
<div class="a" style="left:634px;top:432px;width:1px;height:19px;background:#c9dcf7"></div>
<div class="a" style="left:762px;top:432px;width:1px;height:19px;background:#c9dcf7"></div>
<div class="a" style="left:778px;top:432px;width:1px;height:19px;background:#c9dcf7"></div>
<div class="a" style="left:794px;top:432px;width:1px;height:19px;background:#c9dcf7"></div>
<div class="a" style="left:882px;top:432px;width:1px;height:19px;background:#c9dcf7"></div>
<div class="a" style="left:970px;top:432px;width:1px;height:19px;background:#c9dcf7"></div>
<div class="t" style="left:277.00px;top:432.69px;letter-spacing:-0.118px;">133</div>
<div class="a c" style="left:298px;top:432px;width:152px;height:19px"><div class="t" style="left:5.00px;top:0.69px;letter-spacing:-0.049px;color:#000">Mitarbeitergutschein "Frohe Ostern"</div></div>
<div class="t" style="left:455.00px;top:432.69px;letter-spacing:-0.609px;color:#000">EXA-5XF-6J3-CAN</div>
<div class="t" style="left:604.00px;top:432.69px;letter-spacing:-0.105px;color:#000">80,00</div>
<svg class="a" style="left:767px;top:438px" width="9" height="8" viewBox="0 0 9 8"><path d="M1 4L3.2 6.5L8 1.5" stroke="#1ea21e" stroke-width="2.2" fill="none"/></svg>
<div class="t" style="left:800.00px;top:432.69px;letter-spacing:-0.032px;color:#000">26.03.2018 /Mo</div>
<div class="t" style="left:888.00px;top:432.69px;letter-spacing:-0.032px;color:#000">26.03.2018 /Mo</div>
<div class="a" style="left:213px;top:452px;width:819px;height:18px;background:#ffffff"></div>
<div class="a" style="left:298px;top:451px;width:1px;height:19px;background:#c9dcf7"></div>
<div class="a" style="left:450px;top:451px;width:1px;height:19px;background:#c9dcf7"></div>
<div class="a" style="left:570px;top:451px;width:1px;height:19px;background:#c9dcf7"></div>
<div class="a" style="left:634px;top:451px;width:1px;height:19px;background:#c9dcf7"></div>
<div class="a" style="left:762px;top:451px;width:1px;height:19px;background:#c9dcf7"></div>
<div class="a" style="left:778px;top:451px;width:1px;height:19px;background:#c9dcf7"></div>
<div class="a" style="left:794px;top:451px;width:1px;height:19px;background:#c9dcf7"></div>
<div class="a" style="left:882px;top:451px;width:1px;height:19px;background:#c9dcf7"></div>
<div class="a" style="left:970px;top:451px;width:1px;height:19px;background:#c9dcf7"></div>
<div class="t" style="left:277.00px;top:451.69px;letter-spacing:-0.118px;">134</div>
<div class="a c" style="left:298px;top:451px;width:152px;height:19px"><div class="t" style="left:5.00px;top:0.69px;letter-spacing:-0.049px;color:#000">Mitarbeitergutschein "Frohe Ostern"</div></div>
<div class="t" style="left:455.00px;top:451.69px;letter-spacing:-0.435px;color:#000">6Y2-XTT-H47-O1V</div>
<div class="t" style="left:604.00px;top:451.69px;letter-spacing:-0.105px;color:#000">80,00</div>
<svg class="a" style="left:767px;top:457px" width="9" height="8" viewBox="0 0 9 8"><path d="M1 4L3.2 6.5L8 1.5" stroke="#1ea21e" stroke-width="2.2" fill="none"/></svg>
<div class="t" style="left:800.00px;top:451.69px;letter-spacing:-0.032px;color:#000">26.03.2018 /Mo</div>
<div class="t" style="left:888.00px;top:451.69px;letter-spacing:-0.032px;color:#000">26.03.2018 /Mo</div>
<div class="a" style="left:213px;top:470px;width:819px;height:20px;background:#dfedfd"></div>
<div class="a" style="left:298px;top:470px;width:1px;height:19px;background:#c9dcf7"></div>
<div class="a" style="left:450px;top:470px;width:1px;height:19px;background:#c9dcf7"></div>
<div class="a" style="left:570px;top:470px;width:1px;height:19px;background:#c9dcf7"></div>
<div class="a" style="left:634px;top:470px;width:1px;height:19px;background:#c9dcf7"></div>
<div class="a" style="left:762px;top:470px;width:1px;height:19px;background:#c9dcf7"></div>
<div class="a" style="left:778px;top:470px;width:1px;height:19px;background:#c9dcf7"></div>
<div class="a" style="left:794px;top:470px;width:1px;height:19px;background:#c9dcf7"></div>
<div class="a" style="left:882px;top:470px;width:1px;height:19px;background:#c9dcf7"></div>
<div class="a" style="left:970px;top:470px;width:1px;height:19px;background:#c9dcf7"></div>
<div class="t" style="left:277.00px;top:470.69px;letter-spacing:-0.118px;">135</div>
<div class="a c" style="left:298px;top:470px;width:152px;height:19px"><div class="t" style="left:5.00px;top:0.69px;letter-spacing:-0.049px;color:#000">Mitarbeitergutschein "Frohe Ostern"</div></div>
<div class="t" style="left:455.00px;top:470.69px;letter-spacing:-0.349px;color:#000">MVI-C21-UZY-0IE</div>
<div class="t" style="left:604.00px;top:470.69px;letter-spacing:-0.105px;color:#000">80,00</div>
<svg class="a" style="left:767px;top:476px" width="9" height="8" viewBox="0 0 9 8"><path d="M1 4L3.2 6.5L8 1.5" stroke="#1ea21e" stroke-width="2.2" fill="none"/></svg>
<div class="t" style="left:800.00px;top:470.69px;letter-spacing:-0.032px;color:#000">26.03.2018 /Mo</div>
<div class="t" style="left:888.00px;top:470.69px;letter-spacing:-0.032px;color:#000">26.03.2018 /Mo</div>
<div class="a" style="left:213px;top:490px;width:819px;height:18px;background:#ffffff"></div>
<div class="a" style="left:298px;top:489px;width:1px;height:19px;background:#c9dcf7"></div>
<div class="a" style="left:450px;top:489px;width:1px;height:19px;background:#c9dcf7"></div>
<div class="a" style="left:570px;top:489px;width:1px;height:19px;background:#c9dcf7"></div>
<div class="a" style="left:634px;top:489px;width:1px;height:19px;background:#c9dcf7"></div>
<div class="a" style="left:762px;top:489px;width:1px;height:19px;background:#c9dcf7"></div>
<div class="a" style="left:778px;top:489px;width:1px;height:19px;background:#c9dcf7"></div>
<div class="a" style="left:794px;top:489px;width:1px;height:19px;background:#c9dcf7"></div>
<div class="a" style="left:882px;top:489px;width:1px;height:19px;background:#c9dcf7"></div>
<div class="a" style="left:970px;top:489px;width:1px;height:19px;background:#c9dcf7"></div>
<div class="t" style="left:277.00px;top:489.69px;letter-spacing:-0.118px;">136</div>
<div class="a c" style="left:298px;top:489px;width:152px;height:19px"><div class="t" style="left:5.00px;top:0.69px;letter-spacing:-0.049px;color:#000">Mitarbeitergutschein "Frohe Ostern"</div></div>
<div class="t" style="left:455.00px;top:489.69px;letter-spacing:-0.435px;color:#000">E11-O61-VTD-VZ6</div>
<div class="t" style="left:604.00px;top:489.69px;letter-spacing:-0.105px;color:#000">80,00</div>
<svg class="a" style="left:767px;top:495px" width="9" height="8" viewBox="0 0 9 8"><path d="M1 4L3.2 6.5L8 1.5" stroke="#1ea21e" stroke-width="2.2" fill="none"/></svg>
<div class="t" style="left:800.00px;top:489.69px;letter-spacing:-0.032px;color:#000">26.03.2018 /Mo</div>
<div class="t" style="left:888.00px;top:489.69px;letter-spacing:-0.032px;color:#000">26.03.2018 /Mo</div>
<div class="a" style="left:213px;top:508px;width:819px;height:20px;background:#dfedfd"></div>
<div class="a" style="left:298px;top:508px;width:1px;height:19px;background:#c9dcf7"></div>
<div class="a" style="left:450px;top:508px;width:1px;height:19px;background:#c9dcf7"></div>
<div class="a" style="left:570px;top:508px;width:1px;height:19px;background:#c9dcf7"></div>
<div class="a" style="left:634px;top:508px;width:1px;height:19px;background:#c9dcf7"></div>
<div class="a" style="left:762px;top:508px;width:1px;height:19px;background:#c9dcf7"></div>
<div class="a" style="left:778px;top:508px;width:1px;height:19px;background:#c9dcf7"></div>
<div class="a" style="left:794px;top:508px;width:1px;height:19px;background:#c9dcf7"></div>
<div class="a" style="left:882px;top:508px;width:1px;height:19px;background:#c9dcf7"></div>
<div class="a" style="left:970px;top:508px;width:1px;height:19px;background:#c9dcf7"></div>
<div class="t" style="left:277.00px;top:508.69px;letter-spacing:-0.118px;">137</div>
<div class="a c" style="left:298px;top:508px;width:152px;height:19px"><div class="t" style="left:5.00px;top:0.69px;letter-spacing:-0.049px;color:#000">Mitarbeitergutschein "Frohe Ostern"</div></div>
<div class="t" style="left:455.00px;top:508.69px;letter-spacing:-0.587px;color:#000">UXH-3EA-9O4-6GP</div>
<div class="t" style="left:604.00px;top:508.69px;letter-spacing:-0.105px;color:#000">80,00</div>
<svg class="a" style="left:767px;top:514px" width="9" height="8" viewBox="0 0 9 8"><path d="M1 4L3.2 6.5L8 1.5" stroke="#1ea21e" stroke-width="2.2" fill="none"/></svg>
<div class="t" style="left:800.00px;top:508.69px;letter-spacing:-0.032px;color:#000">26.03.2018 /Mo</div>
<div class="t" style="left:888.00px;top:508.69px;letter-spacing:-0.032px;color:#000">26.03.2018 /Mo</div>
<div class="a" style="left:213px;top:528px;width:819px;height:18px;background:#ffffff"></div>
<div class="a" style="left:298px;top:527px;width:1px;height:19px;background:#c9dcf7"></div>
<div class="a" style="left:450px;top:527px;width:1px;height:19px;background:#c9dcf7"></div>
<div class="a" style="left:570px;top:527px;width:1px;height:19px;background:#c9dcf7"></div>
<div class="a" style="left:634px;top:527px;width:1px;height:19px;background:#c9dcf7"></div>
<div class="a" style="left:762px;top:527px;width:1px;height:19px;background:#c9dcf7"></div>
<div class="a" style="left:778px;top:527px;width:1px;height:19px;background:#c9dcf7"></div>
<div class="a" style="left:794px;top:527px;width:1px;height:19px;background:#c9dcf7"></div>
<div class="a" style="left:882px;top:527px;width:1px;height:19px;background:#c9dcf7"></div>
<div class="a" style="left:970px;top:527px;width:1px;height:19px;background:#c9dcf7"></div>
<div class="t" style="left:277.00px;top:527.69px;letter-spacing:-0.118px;">138</div>
<div class="a c" style="left:298px;top:527px;width:152px;height:19px"><div class="t" style="left:5.00px;top:0.69px;letter-spacing:-0.049px;color:#000">Mitarbeitergutschein "Frohe Ostern"</div></div>
<div class="t" style="left:455.00px;top:527.69px;letter-spacing:-0.420px;color:#000">MZ9-VAO-K98-I8X</div>
<div class="t" style="left:604.00px;top:527.69px;letter-spacing:-0.105px;color:#000">80,00</div>
<svg class="a" style="left:767px;top:533px" width="9" height="8" viewBox="0 0 9 8"><path d="M1 4L3.2 6.5L8 1.5" stroke="#1ea21e" stroke-width="2.2" fill="none"/></svg>
<div class="t" style="left:800.00px;top:527.69px;letter-spacing:-0.032px;color:#000">26.03.2018 /Mo</div>
<div class="t" style="left:888.00px;top:527.69px;letter-spacing:-0.032px;color:#000">26.03.2018 /Mo</div>
<div class="a" style="left:213px;top:546px;width:819px;height:20px;background:#dfedfd"></div>
<div class="a" style="left:298px;top:546px;width:1px;height:19px;background:#c9dcf7"></div>
<div class="a" style="left:450px;top:546px;width:1px;height:19px;background:#c9dcf7"></div>
<div class="a" style="left:570px;top:546px;width:1px;height:19px;background:#c9dcf7"></div>
<div class="a" style="left:634px;top:546px;width:1px;height:19px;background:#c9dcf7"></div>
<div class="a" style="left:762px;top:546px;width:1px;height:19px;background:#c9dcf7"></div>
<div class="a" style="left:778px;top:546px;width:1px;height:19px;background:#c9dcf7"></div>
<div class="a" style="left:794px;top:546px;width:1px;height:19px;background:#c9dcf7"></div>
<div class="a" style="left:882px;top:546px;width:1px;height:19px;background:#c9dcf7"></div>
<div class="a" style="left:970px;top:546px;width:1px;height:19px;background:#c9dcf7"></div>
<div class="t" style="left:277.00px;top:546.69px;letter-spacing:-0.118px;">139</div>
<div class="a c" style="left:298px;top:546px;width:152px;height:19px"><div class="t" style="left:5.00px;top:0.69px;letter-spacing:-0.049px;color:#000">Mitarbeitergutschein "Frohe Ostern"</div></div>
<div class="t" style="left:455.00px;top:546.69px;letter-spacing:-0.667px;color:#000">2VP-AJW-X4Z-UPG</div>
<div class="t" style="left:604.00px;top:546.69px;letter-spacing:-0.105px;color:#000">80,00</div>
<svg class="a" style="left:767px;top:552px" width="9" height="8" viewBox="0 0 9 8"><path d="M1 4L3.2 6.5L8 1.5" stroke="#1ea21e" stroke-width="2.2" fill="none"/></svg>
<div class="t" style="left:800.00px;top:546.69px;letter-spacing:-0.032px;color:#000">26.03.2018 /Mo</div>
<div class="t" style="left:888.00px;top:546.69px;letter-spacing:-0.032px;color:#000">26.03.2018 /Mo</div>
<div class="a" style="left:213px;top:566px;width:819px;height:18px;background:#ffffff"></div>
<div class="a" style="left:298px;top:565px;width:1px;height:19px;background:#c9dcf7"></div>
<div class="a" style="left:450px;top:565px;width:1px;height:19px;background:#c9dcf7"></div>
<div class="a" style="left:570px;top:565px;width:1px;height:19px;background:#c9dcf7"></div>
<div class="a" style="left:634px;top:565px;width:1px;height:19px;background:#c9dcf7"></div>
<div class="a" style="left:762px;top:565px;width:1px;height:19px;background:#c9dcf7"></div>
<div class="a" style="left:778px;top:565px;width:1px;height:19px;background:#c9dcf7"></div>
<div class="a" style="left:794px;top:565px;width:1px;height:19px;background:#c9dcf7"></div>
<div class="a" style="left:882px;top:565px;width:1px;height:19px;background:#c9dcf7"></div>
<div class="a" style="left:970px;top:565px;width:1px;height:19px;background:#c9dcf7"></div>
<div class="t" style="left:277.00px;top:565.69px;letter-spacing:-0.118px;">140</div>
<div class="a c" style="left:298px;top:565px;width:152px;height:19px"><div class="t" style="left:5.00px;top:0.69px;letter-spacing:-0.049px;color:#000">Mitarbeitergutschein "Frohe Ostern"</div></div>
<div class="t" style="left:455.00px;top:565.69px;letter-spacing:-0.350px;color:#000">I0N-S8C-QJB-7L2</div>
<div class="t" style="left:604.00px;top:565.69px;letter-spacing:-0.105px;color:#000">80,00</div>
<svg class="a" style="left:767px;top:571px" width="9" height="8" viewBox="0 0 9 8"><path d="M1 4L3.2 6.5L8 1.5" stroke="#1ea21e" stroke-width="2.2" fill="none"/></svg>
<div class="t" style="left:800.00px;top:565.69px;letter-spacing:-0.032px;color:#000">26.03.2018 /Mo</div>
<div class="t" style="left:888.00px;top:565.69px;letter-spacing:-0.032px;color:#000">26.03.2018 /Mo</div>
<div class="a" style="left:213px;top:584px;width:819px;height:20px;background:#dfedfd"></div>
<div class="a" style="left:298px;top:584px;width:1px;height:19px;background:#c9dcf7"></div>
<div class="a" style="left:450px;top:584px;width:1px;height:19px;background:#c9dcf7"></div>
<div class="a" style="left:570px;top:584px;width:1px;height:19px;background:#c9dcf7"></div>
<div class="a" style="left:634px;top:584px;width:1px;height:19px;background:#c9dcf7"></div>
<div class="a" style="left:762px;top:584px;width:1px;height:19px;background:#c9dcf7"></div>
<div class="a" style="left:778px;top:584px;width:1px;height:19px;background:#c9dcf7"></div>
<div class="a" style="left:794px;top:584px;width:1px;height:19px;background:#c9dcf7"></div>
<div class="a" style="left:882px;top:584px;width:1px;height:19px;background:#c9dcf7"></div>
<div class="a" style="left:970px;top:584px;width:1px;height:19px;background:#c9dcf7"></div>
<div class="t" style="left:277.00px;top:584.69px;letter-spacing:-0.118px;">141</div>
<div class="a c" style="left:298px;top:584px;width:152px;height:19px"><div class="t" style="left:5.00px;top:0.69px;letter-spacing:-0.049px;color:#000">Mitarbeitergutschein "Frohe Ostern"</div></div>
<div class="t" style="left:455.00px;top:584.69px;letter-spacing:-0.380px;color:#000">YW3-6GL-3E2-I3K</div>
<div class="t" style="left:604.00px;top:584.69px;letter-spacing:-0.105px;color:#000">80,00</div>
<svg class="a" style="left:767px;top:590px" width="9" height="8" viewBox="0 0 9 8"><path d="M1 4L3.2 6.5L8 1.5" stroke="#1ea21e" stroke-width="2.2" fill="none"/></svg>
<div class="t" style="left:800.00px;top:584.69px;letter-spacing:-0.032px;color:#000">26.03.2018 /Mo</div>
<div class="t" style="left:888.00px;top:584.69px;letter-spacing:-0.032px;color:#000">26.03.2018 /Mo</div>
<div class="a" style="left:213px;top:604px;width:819px;height:18px;background:#ffffff"></div>
<div class="a" style="left:298px;top:603px;width:1px;height:19px;background:#c9dcf7"></div>
<div class="a" style="left:450px;top:603px;width:1px;height:19px;background:#c9dcf7"></div>
<div class="a" style="left:570px;top:603px;width:1px;height:19px;background:#c9dcf7"></div>
<div class="a" style="left:634px;top:603px;width:1px;height:19px;background:#c9dcf7"></div>
<div class="a" style="left:762px;top:603px;width:1px;height:19px;background:#c9dcf7"></div>
<div class="a" style="left:778px;top:603px;width:1px;height:19px;background:#c9dcf7"></div>
<div class="a" style="left:794px;top:603px;width:1px;height:19px;background:#c9dcf7"></div>
<div class="a" style="left:882px;top:603px;width:1px;height:19px;background:#c9dcf7"></div>
<div class="a" style="left:970px;top:603px;width:1px;height:19px;background:#c9dcf7"></div>
<div class="t" style="left:277.00px;top:603.69px;letter-spacing:-0.118px;">142</div>
<div class="a c" style="left:298px;top:603px;width:152px;height:19px"><div class="t" style="left:5.00px;top:0.69px;letter-spacing:-0.049px;color:#000">Mitarbeitergutschein "Frohe Ostern"</div></div>
<div class="t" style="left:455.00px;top:603.69px;letter-spacing:-0.625px;color:#000">QYV-ZCZ-EZ6-UUT</div>
<div class="t" style="left:604.00px;top:603.69px;letter-spacing:-0.105px;color:#000">80,00</div>
<svg class="a" style="left:767px;top:609px" width="9" height="8" viewBox="0 0 9 8"><path d="M1 4L3.2 6.5L8 1.5" stroke="#1ea21e" stroke-width="2.2" fill="none"/></svg>
<div class="t" style="left:800.00px;top:603.69px;letter-spacing:-0.032px;color:#000">26.03.2018 /Mo</div>
<div class="t" style="left:888.00px;top:603.69px;letter-spacing:-0.032px;color:#000">26.03.2018 /Mo</div>
<div class="a" style="left:213px;top:622px;width:819px;height:20px;background:#dfedfd"></div>
<div class="a" style="left:298px;top:622px;width:1px;height:19px;background:#c9dcf7"></div>
<div class="a" style="left:450px;top:622px;width:1px;height:19px;background:#c9dcf7"></div>
<div class="a" style="left:570px;top:622px;width:1px;height:19px;background:#c9dcf7"></div>
<div class="a" style="left:634px;top:622px;width:1px;height:19px;background:#c9dcf7"></div>
<div class="a" style="left:762px;top:622px;width:1px;height:19px;background:#c9dcf7"></div>
<div class="a" style="left:778px;top:622px;width:1px;height:19px;background:#c9dcf7"></div>
<div class="a" style="left:794px;top:622px;width:1px;height:19px;background:#c9dcf7"></div>
<div class="a" style="left:882px;top:622px;width:1px;height:19px;background:#c9dcf7"></div>
<div class="a" style="left:970px;top:622px;width:1px;height:19px;background:#c9dcf7"></div>
<svg class="a" style="left:1028px;top:146px" width="24" height="46" viewBox="0 0 24 46"><g fill="#c2c2c2"><rect x="9" y="5" width="7" height="2"/><path d="M7.8 13L12.3 8L16.8 13Z"/><path d="M7.8 26L12.3 21L16.8 26H13.8V28.3H10.8V26Z"/><path d="M7.8 42L12.3 37L16.8 42Z"/></g></svg>
<svg class="a" style="left:1028px;top:368px" width="24" height="88" viewBox="0 0 24 88"><g stroke="#c2c2c2" fill="none"><path d="M9.3 6.2C8.2 7 8.2 13.8 9.3 14.6M16.7 6.2C17.8 7 17.8 13.8 16.7 14.6" stroke-width="1.5"/><path d="M13 6V15" stroke-width="2"/><path d="M6 21.5H19M6 43.5H19M6 65.5H19" stroke-width="1"/><rect x="6.5" y="26.5" width="8.5" height="8.5" rx="2.5" fill="#f1f1fb" stroke-width="1.1"/><path d="M14 34L19 39" stroke-width="2.6"/><path d="M6 58.5H19" stroke-width="1"/></g><path d="M6 51L9.6 57.5M9.6 51L6 57.5M10.8 57.5V51.3L12.6 55.2L14.4 51.3V57.5M16 51V57H19.5" stroke="#c2c2c2" stroke-width="1.1" fill="none"/><g fill="none" stroke="#c2c2c2"><path d="M5.5 72.5H16L12.2 77.5V82.5H9.3V77.5Z" fill="#f4f4f4" stroke-width="1"/><rect x="5" y="71.6" width="11.5" height="1.8" fill="#c2c2c2" stroke="none"/><path d="M14.5 75.5H20M14.5 77.5H20M14.5 79.5H20M14.5 81.5H20" stroke-width="1"/></g></svg>
<div class="a" style="left:263px;top:428px;width:714px;height:203px;border:5px solid #007a78;box-shadow:3px 3px 3px rgba(0,0,0,0.55), inset 3px 3px 3px rgba(0,0,0,0.55)"></div>
</body></html>
